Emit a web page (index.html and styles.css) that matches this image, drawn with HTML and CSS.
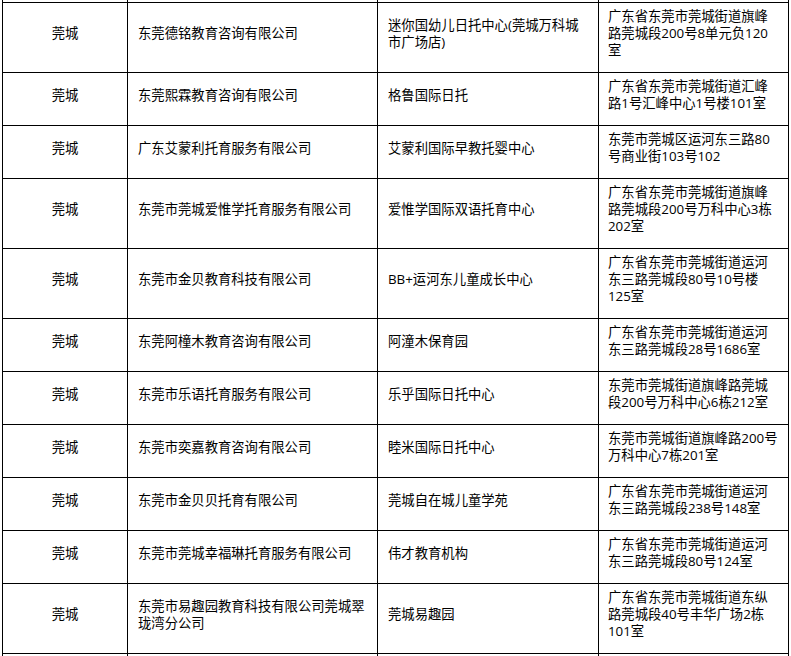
FILE: index.html
```html
<!DOCTYPE html>
<html lang="zh-CN">
<head>
<meta charset="utf-8">
<title>托育机构名单</title>
<link rel="stylesheet" href="styles.css">
</head>
<body>
<div class="sheet">
  <div class="cell stub"></div><div class="cell stub"></div><div class="cell stub"></div><div class="cell stub"></div>

  <div class="cell area">莞城</div>
  <div class="cell">东莞德铭教育咨询有限公司</div>
  <div class="cell">迷你国幼儿日托中心(莞城万科城市广场店)</div>
  <div class="cell addr">广东省东莞市莞城街道旗峰路莞城段200号8单元负120室</div>

  <div class="cell area">莞城</div>
  <div class="cell">东莞熙霖教育咨询有限公司</div>
  <div class="cell">格鲁国际日托</div>
  <div class="cell addr">广东省东莞市莞城街道汇峰路1号汇峰中心1号楼101室</div>

  <div class="cell area">莞城</div>
  <div class="cell">广东艾蒙利托育服务有限公司</div>
  <div class="cell">艾蒙利国际早教托婴中心</div>
  <div class="cell addr">东莞市莞城区运河东三路80号商业街103号102</div>

  <div class="cell area">莞城</div>
  <div class="cell">东莞市莞城爱惟学托育服务有限公司</div>
  <div class="cell">爱惟学国际双语托育中心</div>
  <div class="cell addr">广东省东莞市莞城街道旗峰路莞城段200号万科中心3栋202室</div>

  <div class="cell area">莞城</div>
  <div class="cell">东莞市金贝教育科技有限公司</div>
  <div class="cell">BB+运河东儿童成长中心</div>
  <div class="cell addr">广东省东莞市莞城街道运河东三路莞城段80号10号楼125室</div>

  <div class="cell area">莞城</div>
  <div class="cell">东莞阿橦木教育咨询有限公司</div>
  <div class="cell">阿潼木保育园</div>
  <div class="cell addr">广东省东莞市莞城街道运河东三路莞城段28号1686室</div>

  <div class="cell area">莞城</div>
  <div class="cell">东莞市乐语托育服务有限公司</div>
  <div class="cell">乐乎国际日托中心</div>
  <div class="cell addr">东莞市莞城街道旗峰路莞城段200号万科中心6栋212室</div>

  <div class="cell area">莞城</div>
  <div class="cell">东莞市奕嘉教育咨询有限公司</div>
  <div class="cell">睦米国际日托中心</div>
  <div class="cell addr">东莞市莞城街道旗峰路200号万科中心7栋201室</div>

  <div class="cell area">莞城</div>
  <div class="cell">东莞市金贝贝托育有限公司</div>
  <div class="cell">莞城自在城儿童学苑</div>
  <div class="cell addr">广东省东莞市莞城街道运河东三路莞城段238号148室</div>

  <div class="cell area">莞城</div>
  <div class="cell">东莞市莞城幸福琳托育服务有限公司</div>
  <div class="cell">伟才教育机构</div>
  <div class="cell addr">广东省东莞市莞城街道运河东三路莞城段80号124室</div>

  <div class="cell area">莞城</div>
  <div class="cell">东莞市易趣园教育科技有限公司莞城翠珑湾分公司</div>
  <div class="cell">莞城易趣园</div>
  <div class="cell addr">广东省东莞市莞城街道东纵路莞城段40号丰华广场2栋101室</div>

  <div class="cell stub tail"></div><div class="cell stub tail"></div><div class="cell stub tail"></div><div class="cell stub tail"></div>
</div>
</body>
</html>
```

FILE: styles.css
```css
html, body {
  margin: 0;
  padding: 0;
  height: 656px;
  overflow: hidden;
  background: #fff;
}

.sheet {
  display: grid;
  grid-template-columns: 125px 250px 221px 190px;
  margin-left: 2px;
  width: max-content;
  border-left: 1px solid #000;
  font-family: "Open Sans", "Noto Sans CJK SC", sans-serif;
  font-size: 13.333px;
  line-height: 17px;
  color: #000;
}

.cell {
  box-sizing: border-box;
  display: flex;
  align-items: center;
  padding: 5px 10px 13px 10px;
  border-right: 1px solid #000;
  border-bottom: 1px solid #000;
}

.area {
  justify-content: center;
}

.addr {
  padding-left: 9px;
  padding-right: 9px;
}

.stub {
  height: 3px;
  padding: 0;
}

.stub.tail {
  height: 30px;
  border-bottom: none;
}
```
